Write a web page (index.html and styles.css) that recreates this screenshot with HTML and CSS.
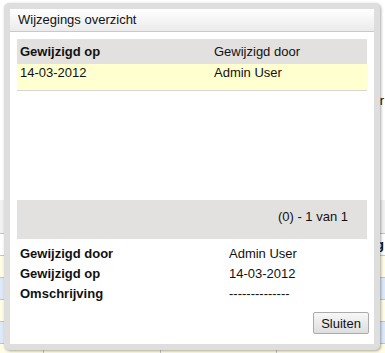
FILE: index.html
```html
<!DOCTYPE html>
<html>
<head>
	<title>Wijzegings overzicht</title>
	<link rel="stylesheet" href="styles.css">
</head>
<body>
<div class="page">
  <div class="page-note">ar</div>
  <div class="page-toolbar"></div>
  <table class="page-grid">
    <tr class="head"><td></td><td></td><td></td><td>g</td></tr>
    <tr class="odd"><td></td><td></td><td></td><td></td></tr>
    <tr class="even"><td></td><td></td><td></td><td></td></tr>
    <tr class="odd"><td></td><td></td><td></td><td></td></tr>
    <tr class="even"><td></td><td></td><td></td><td></td></tr>
    <tr class="odd"><td></td><td></td><td></td><td></td></tr>
  </table>
</div>

<div class="dialog">
  <div class="dialog-title">Wijzegings overzicht</div>
  <div class="dialog-body">
    <div class="history">
      <table class="history-table">
        <tr class="history-head">
          <th class="col-date">Gewijzigd op</th>
          <td>Gewijzigd door</td>
        </tr>
        <tr class="history-row">
          <td class="col-date">14-03-2012</td>
          <td>Admin User</td>
        </tr>
      </table>
    </div>
    <div class="pager">(0) - 1 van 1</div>
    <div class="details">
      <div class="detail"><span class="label">Gewijzigd door</span><span>Admin User</span></div>
      <div class="detail"><span class="label">Gewijzigd op</span><span>14-03-2012</span></div>
      <div class="detail"><span class="label">Omschrijving</span><span>--------------</span></div>
    </div>
    <div class="buttons">
      <button class="btn">Sluiten</button>
    </div>
  </div>
</div>
</body>
</html>
```

FILE: styles.css
```css
html, body {
    margin: 0;
    padding: 0;
    background: #fff;
    font: 13px/15px "Liberation Sans", Arial, sans-serif;
    color: #111;
}

/* page behind the dialog */
.page {
    height: 353px;
    overflow: hidden;
}
.page-note {
    margin-top: 93px;
    height: 15px;
    text-align: right;
    padding-right: 1px;
    white-space: nowrap;
}
.page-toolbar {
    margin-top: 92px;
    height: 33px;
    background: #f1f1f1;
}
.page-grid {
    border-collapse: collapse;
    width: 100%;
    table-layout: fixed;
}
.page-grid td {
    height: 21px;
    padding: 0 1px 0 4px;
    border-top: 1px solid #c4c4c4;
    border-left: 1px solid #c4c4c4;
    white-space: nowrap;
    overflow: hidden;
}
.page-grid td:first-child { width: 38px; border-left: 0; }
.page-grid td:nth-child(2) { width: 112px; }
.page-grid td:nth-child(3) { width: 111px; }
.page-grid .head td {
    background: #fff;
    font-weight: bold;
    text-align: right;
    border-left: 0;
}
.page-grid .odd td { background: #fffde4; }
.page-grid .even td { background: #dde9f9; }

/* dialog */
.dialog {
    position: absolute;
    left: 4px;
    top: 3px;
    width: 364px;
    height: 335px;
    border: 6px solid #dedede;
    border-radius: 5px;
    background: #fff;
    box-shadow: 1px 1px 3px rgba(0, 0, 0, .35);
    display: flex;
    flex-direction: column;
}
.dialog-title {
    height: 22px;
    line-height: 22px;
    padding-left: 8px;
    border-bottom: 1px solid #c9c9c9;
    background: linear-gradient(#fff, #ebebeb);
}
.dialog-body {
    flex: 1;
    padding: 7px 7px 0 7px;
    display: flex;
    flex-direction: column;
}
.history {
    height: 161px;
}
.history-table {
    width: 100%;
    border-collapse: collapse;
}
.history-table th,
.history-table td {
    text-align: left;
    padding: 0 3px;
}
.history-table .col-date {
    width: 188px;
}
.history-head th,
.history-head td {
    height: 25px;
    background: #e2e1e0;
    vertical-align: middle;
}
.history-head th { font-weight: bold; }
.history-row td {
    height: 25px;
    padding-top: 1px;
    vertical-align: top;
    background: #ffffcf;
    border-bottom: 1px solid #d6d6d6;
}
.pager {
    height: 30px;
    padding: 9px 19px 0 0;
    background: #e2e1e0;
    text-align: right;
}
.details {
    margin-top: 5px;
}
.detail {
    display: flex;
    height: 20px;
    line-height: 20px;
    padding-left: 3px;
}
.detail .label {
    width: 209px;
    font-weight: bold;
}
.buttons {
    display: flex;
    justify-content: flex-end;
    margin-top: 8px;
    margin-right: -2px;
}
.btn {
    width: 56px;
    height: 22px;
    padding: 0;
    font: 13px "Liberation Sans", Arial, sans-serif;
    color: #111;
    border: 1px solid #ababab;
    border-radius: 2px;
    background: linear-gradient(#f7f7f7, #dedede);
}
```
